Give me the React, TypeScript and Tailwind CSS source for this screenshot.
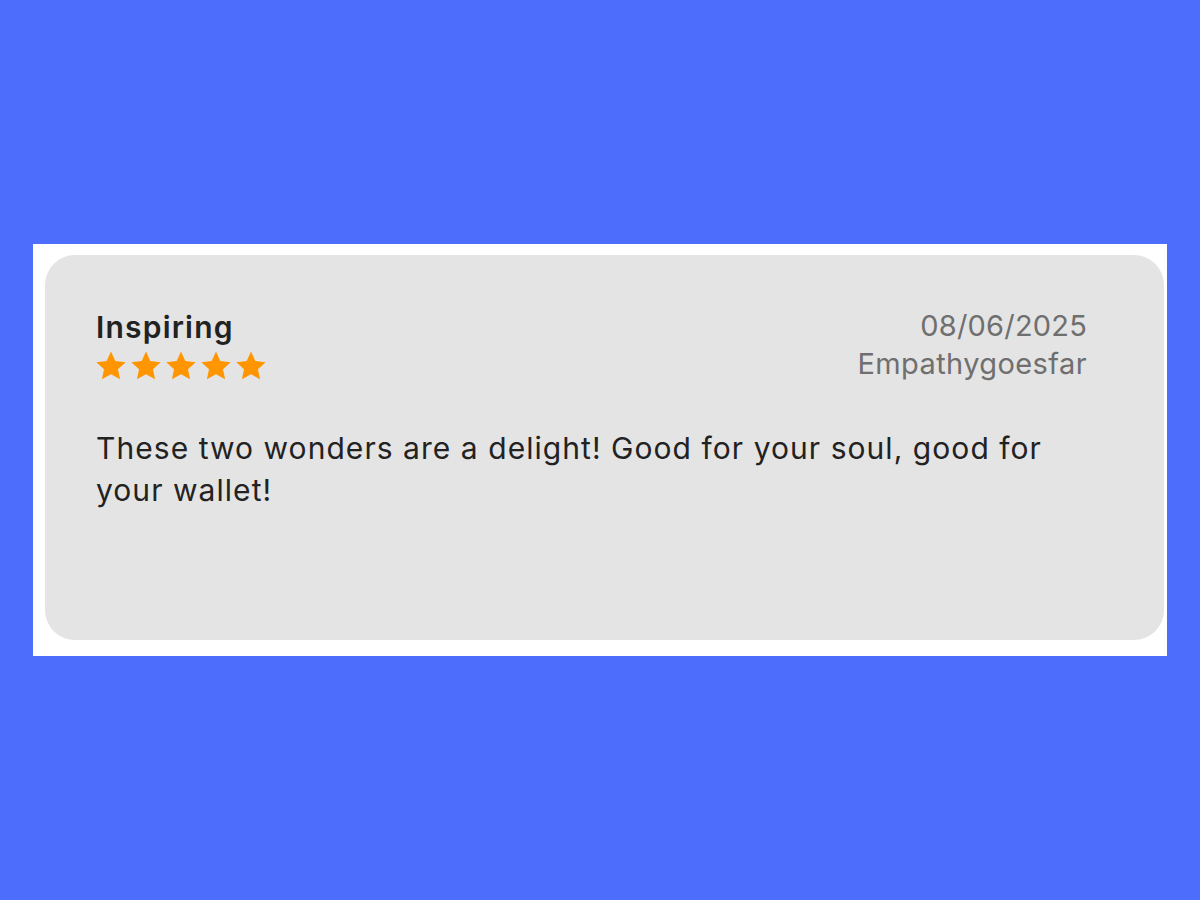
import React from 'react';

const Star = () => (
  <svg width="34" height="34" viewBox="0 0 24 24" className="shrink-0">
    <path
      d="M12 1.8l3.05 6.68 7.3.8-5.43 4.95 1.5 7.2L12 17.78l-6.42 3.65 1.5-7.2L1.65 9.28l7.3-.8L12 1.8z"
      fill="#ff9500"
    />
  </svg>
);

export default function App() {
  return (
    <div className="w-[1200px] h-[900px] bg-[#4d6dfd] flex items-center justify-center" style={{ fontFamily: 'Inter, "Noto Sans", sans-serif' }}>
      <div className="w-[1134px] h-[412px] bg-white pl-3 pr-[3px] pt-[11px] pb-4 flex">
        <div className="flex-1 bg-[#e4e4e4] rounded-[30px] pl-[51px] pr-[77px] pt-[54px] flex flex-col">
          <div className="flex justify-between items-start">
            <div className="flex flex-col">
              <h2 className="text-[30px] leading-[36px] font-semibold text-[#222222] tracking-[1.2px]">Inspiring</h2>
              <div className="flex gap-[1px] -ml-[2px] mt-[4px]">
                <Star />
                <Star />
                <Star />
                <Star />
                <Star />
              </div>
            </div>
            <div className="flex flex-col items-end text-[29px] leading-[38px] text-[#6f6f6f] -mt-[2px]">
              <span className="tracking-[0.2px]">08/06/2025</span>
              <span className="tracking-[0.4px]">Empathygoesfar</span>
            </div>
          </div>
          <p className="mt-[44px] text-[30px] leading-[42px] text-[#222222] tracking-[1.05px]">
            These two wonders are a delight! Good for your soul, good for your wallet!
          </p>
        </div>
      </div>
    </div>
  );
}
